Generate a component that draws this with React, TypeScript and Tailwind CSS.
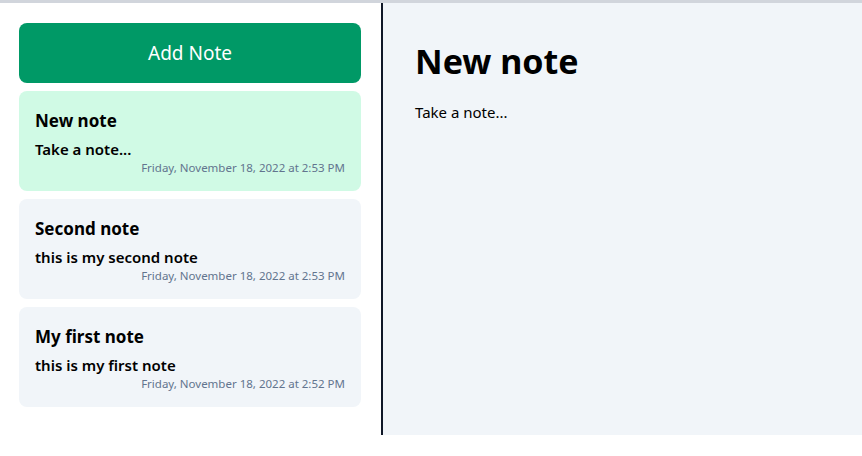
const notes = [
  {
    id: 3,
    title: "New note",
    body: "Take a note...",
    date: "Friday, November 18, 2022 at 2:53 PM",
    active: true,
  },
  {
    id: 2,
    title: "Second note",
    body: "this is my second note",
    date: "Friday, November 18, 2022 at 2:53 PM",
    active: false,
  },
  {
    id: 1,
    title: "My first note",
    body: "this is my first note",
    date: "Friday, November 18, 2022 at 2:52 PM",
    active: false,
  },
];

const NoteCard = ({ note }: { note: (typeof notes)[number] }) => (
  <div
    className={`rounded-lg px-4 pt-4 pb-[15px] ${note.active ? "bg-emerald-100" : "bg-slate-100"}`}
  >
    <h2 className="text-[17px] font-bold text-black leading-7">{note.title}</h2>
    <p className="mt-[2px] text-[15px] font-semibold text-black leading-6">{note.body}</p>
    <p className="-mt-px text-[11.5px] text-slate-500 text-right leading-4">{note.date}</p>
  </div>
);

export default function App() {
  return (
    <div
      className="w-[862px] h-[456px] bg-white border-t-[3px] border-gray-300"
      style={{ fontFamily: '"Noto Sans", "Open Sans", sans-serif' }}
    >
      <div className="flex h-[432px]">
        <aside className="w-[383px] shrink-0 border-r-2 border-gray-900 pl-[19px] pr-5 pt-5">
          <button className="w-full h-[60px] rounded-lg bg-emerald-600 text-white text-[19px]">
            Add Note
          </button>
          <div className="flex flex-col gap-2 mt-2">
            {notes.map((n) => (
              <NoteCard key={n.id} note={n} />
            ))}
          </div>
        </aside>
        <main className="flex-1 bg-slate-100 px-8 pt-[38px]">
          <h1 className="text-[34px] font-bold text-black leading-10">New note</h1>
          <p className="mt-[19px] text-[15px] text-black leading-6">Take a note...</p>
        </main>
      </div>
    </div>
  );
}
